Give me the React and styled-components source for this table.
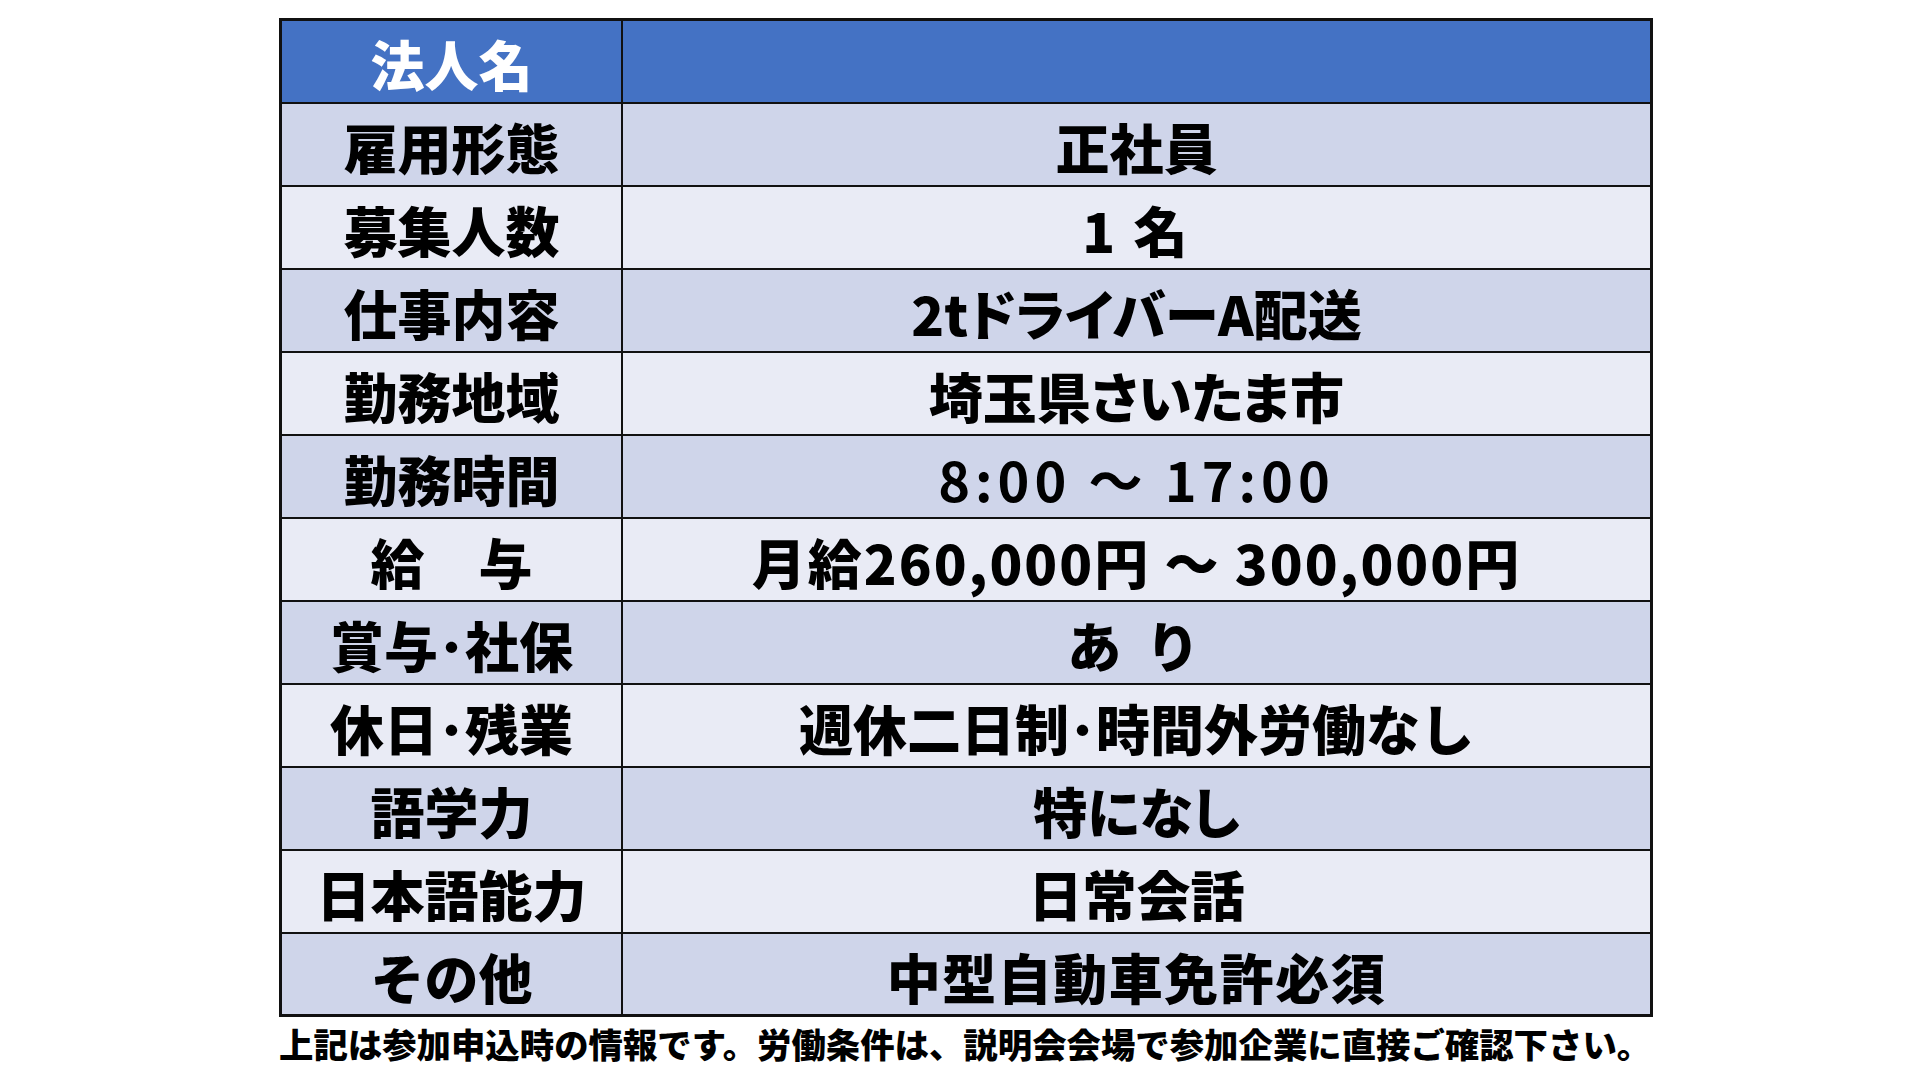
import React from "react";
import styled, { createGlobalStyle } from "styled-components";

const GlobalStyle = createGlobalStyle`
  html, body {
    margin: 0;
    padding: 0;
    background: #fff;
  }
  body {
    font-family: "Noto Sans CJK JP", "Noto Sans", sans-serif;
    color: #000;
  }
`;

const Page = styled.div`
  width: 1920px;
  height: 1080px;
  padding: 18px 0 0 279px;
  box-sizing: border-box;
  overflow: hidden;
`;

const Table = styled.table`
  width: 1374px;
  border-collapse: collapse;
  table-layout: fixed;
  border: 3px solid #111;
`;

const Row = styled.tr`
  height: 83px;
  background: ${(p) => (p.$head ? "#4472c4" : p.$dark ? "#cfd5ea" : "#e9ebf5")};
`;

const LabelCell = styled.td`
  width: 339px;
  padding: 6px 0 0;
  border: 2px solid #111;
  text-align: center;
  font-size: 54px;
  font-weight: 900;
  line-height: 1;
  white-space: nowrap;
  color: ${(p) => (p.$head ? "#fff" : "#000")};
`;

const ValueCell = styled.td`
  padding: 6px 0 0;
  border: 2px solid #111;
  text-align: center;
  font-size: 54px;
  font-weight: 900;
  line-height: 1;
  white-space: nowrap;
`;

const Value = styled.span`
  display: inline-block;
  font-weight: ${(p) => p.$weight || 900};
  letter-spacing: ${(p) => p.$spacing || 0}px;
  font-feature-settings: ${(p) => (p.$palt ? '"palt"' : "normal")};
`;

const Note = styled.p`
  margin: 0;
  padding-top: 6px;
  font-size: 34.4px;
  font-weight: 900;
  line-height: 1.2;
  white-space: nowrap;
`;

const rows = [
  { label: "雇用形態", value: "正社員" },
  { label: "募集人数", value: "1 名", spacing: 3 },
  { label: "仕事内容", value: "2tドライバーA配送", palt: true },
  { label: "勤務地域", value: "埼玉県さいたま市", palt: true },
  { label: "勤務時間", value: "8:00 ～ 17:00", weight: 700, spacing: 5 },
  { label: "給　与", value: "月給260,000円 ～ 300,000円", spacing: 2 },
  { label: "賞与･社保", value: "あ り", spacing: 6 },
  { label: "休日･残業", value: "週休二日制･時間外労働なし" },
  { label: "語学力", value: "特になし", palt: true },
  { label: "日本語能力", value: "日常会話" },
  { label: "その他", value: "中型自動車免許必須", spacing: 1.5 },
];

const App = () => {
  return (
    <Page>
      <GlobalStyle />
      <Table>
        <tbody>
          <Row $head>
            <LabelCell $head>法人名</LabelCell>
            <ValueCell></ValueCell>
          </Row>
          {rows.map((r, i) => (
            <Row key={r.label} $dark={i % 2 === 0}>
              <LabelCell>{r.label}</LabelCell>
              <ValueCell>
                <Value $weight={r.weight} $spacing={r.spacing} $palt={r.palt}>
                  {r.value}
                </Value>
              </ValueCell>
            </Row>
          ))}
        </tbody>
      </Table>
      <Note>上記は参加申込時の情報です。労働条件は、説明会会場で参加企業に直接ご確認下さい。</Note>
    </Page>
  );
};

export default App;
